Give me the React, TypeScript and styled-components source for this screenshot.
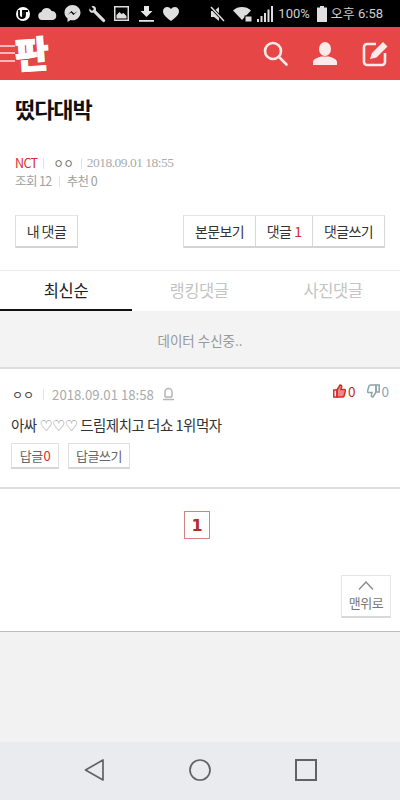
import React from 'react';
import styled, { createGlobalStyle } from 'styled-components';

const GlobalStyle = createGlobalStyle`
  html, body { margin: 0; padding: 0; background: #f2f2f2; }
  body { font-family: "Noto Sans CJK KR", "Noto Sans", sans-serif; }
  * { box-sizing: border-box; }
`;

const Page = styled.div`
  width: 400px;
  height: 800px;
  display: flex;
  flex-direction: column;
  overflow: hidden;
`;

const StatusBar = styled.div`
  height: 27px;
  flex: none;
  background: #000;
  display: flex;
  align-items: center;
  padding: 0 17px 0 15px;
  color: #ddd;
`;

const StatusLeft = styled.div`
  display: flex;
  align-items: center;
  gap: 6px;
  flex: 1;
`;

const StatusRight = styled.div`
  display: flex;
  align-items: center;
  gap: 4px;
`;

const StatusText = styled.span`
  font-family: Roboto, "Noto Sans CJK KR", sans-serif;
  font-size: 13px;
  color: #cfcfcf;
  line-height: 1;
  white-space: nowrap;
`;

const Header = styled.header`
  height: 53px;
  flex: none;
  background: #e64646;
  display: flex;
  align-items: center;
  padding-right: 11px;
`;

const Burger = styled.div`
  width: 15px;
  height: 17px;
  display: flex;
  flex-direction: column;
  justify-content: space-between;
  margin-top: -1px;
  span {
    display: block;
    height: 2px;
    background: #f6b9b9;
  }
`;

const Logo = styled.span`
  font-size: 37px;
  font-weight: 900;
  line-height: 1;
  color: #fff;
  display: block;
  transform: rotate(-4deg) translateY(-1px);
  -webkit-text-stroke: 1px #fff;
  text-shadow: 1px 1px 0 #c93232;
`;

const HeaderIcons = styled.div`
  margin-left: auto;
  display: flex;
  align-items: center;
  gap: 25px;
`;

const Content = styled.main`
  background: #fff;
  flex: none;
`;

const TitleBlock = styled.section`
  padding: 11px 15px 0;
  height: 135px;
`;

const Title = styled.h1`
  margin: 0;
  font-size: 22px;
  line-height: 34px;
  font-weight: 700;
  color: #111;
  letter-spacing: -1.1px;
`;

const Meta = styled.div`
  margin-top: 29px;
  font-size: 12.5px;
  line-height: 18px;
  color: #a0a0a0;
  letter-spacing: -0.6px;
`;

const MetaRow = styled.div`
  display: flex;
  align-items: center;
  gap: 5px;
`;

const Sep = styled.i`
  display: inline-block;
  width: 1px;
  height: 11px;
  background: #e2e2e2;
`;

const Red = styled.span`
  color: #d22e2e;
`;

const Maru = styled.span`
  font-size: 11px;
  letter-spacing: 0;
  color: #666;
`;

const SerifDate = styled.span`
  font-family: "Liberation Serif", serif;
  font-size: 13.5px;
  color: #aaa;
  letter-spacing: -0.5px;
`;

const Toolbar = styled.div`
  display: flex;
  justify-content: space-between;
  padding: 0 15px 22px;
  border-bottom: 1px solid #ececec;
`;

const Group = styled.div`
  display: flex;
`;

const Btn = styled.div<{ $w: number; $joined?: boolean }>`
  width: ${(p) => p.$w}px;
  height: 33px;
  display: flex;
  align-items: center;
  justify-content: center;
  gap: 3px;
  padding-bottom: 1px;
  font-size: 14px;
  letter-spacing: -0.6px;
  color: #333;
  background: #fff;
  border: 1px solid #e6e6e6;
  border-left: ${(p) => (p.$joined ? 'none' : '1px solid #ddd')};
  border-bottom: 2px solid #d4d4d4;
  border-right: 1px solid #d8d8d8;
`;

const Tabs = styled.nav`
  display: grid;
  grid-template-columns: 132px 1fr 1fr;
  height: 40px;
`;

const Tab = styled.div<{ $active?: boolean }>`
  display: flex;
  align-items: center;
  justify-content: center;
  font-size: 16.5px;
  letter-spacing: -0.4px;
  color: ${(p) => (p.$active ? '#222' : '#c4c4c4')};
  border-bottom: 2px solid ${(p) => (p.$active ? '#111' : 'transparent')};
`;

const Receiving = styled.div`
  height: 58px;
  background: #f3f3f3;
  border-bottom: 2px solid #ddd;
  display: flex;
  align-items: center;
  justify-content: center;
  padding-top: 2px;
  font-size: 13.5px;
  color: #999;
`;

const Comment = styled.article`
  padding: 13px 11px 0 11px;
  height: 120px;
  border-bottom: 2px solid #ddd;
`;

const CommentHead = styled.div`
  display: flex;
  align-items: center;
  height: 24px;
  gap: 8px;
  font-size: 13.2px;
  color: #aaa;
`;

const HeadMaru = styled(Maru)`
  font-size: 12px;
  margin-left: 1px;
  margin-right: 1px;
  color: #444;
`;

const Votes = styled.div`
  margin-left: auto;
  display: flex;
  align-items: center;
  gap: 11px;
  margin-top: -6px;
`;

const Vote = styled.span<{ $up?: boolean }>`
  display: flex;
  align-items: center;
  gap: 2px;
  font-size: 13.5px;
  color: ${(p) => (p.$up ? '#c92a2a' : '#8fa3ad')};
`;

const Body = styled.p`
  margin: 9px 0 0;
  font-size: 14.5px;
  line-height: 20px;
  color: #333;
  letter-spacing: -0.5px;
  white-space: nowrap;
`;

const Hearts = styled.span`
  font-family: "DejaVu Sans", sans-serif;
  font-size: 15px;
  color: #777;
  letter-spacing: -0.8px;
`;

const Replies = styled.div`
  display: flex;
  gap: 9px;
  margin-top: 7px;
`;

const ReplyBtn = styled.div<{ $w: number }>`
  width: ${(p) => p.$w}px;
  height: 26px;
  display: flex;
  align-items: center;
  justify-content: center;
  gap: 1px;
  font-size: 13px;
  letter-spacing: -0.5px;
  color: #666;
  border: 1px solid #e0e0e0;
  border-bottom: 2px solid #d6d6d6;
`;

const Pager = styled.div`
  display: flex;
  justify-content: center;
  padding: 22px 0 36px;
  margin-left: -6px;
`;

const PageNum = styled.div`
  width: 26px;
  height: 28px;
  display: flex;
  align-items: center;
  justify-content: center;
  border: 1px solid #d98080;
  color: #b52b2b;
  font-family: "DejaVu Sans", sans-serif;
  font-size: 16px;
  font-weight: 700;
`;

const TopRow = styled.div`
  display: flex;
  justify-content: flex-end;
  padding: 0 9px 13px 0;
  border-bottom: 1px solid #bdbdbd;
`;

const TopBtn = styled.div`
  width: 50px;
  height: 43px;
  display: flex;
  flex-direction: column;
  align-items: center;
  padding-top: 5px;
  border: 1px solid #e6e6e6;
  border-bottom: 2px solid #d8d8d8;
  font-size: 13px;
  line-height: 15px;
  letter-spacing: -0.5px;
  color: #777;
`;

const TopLabel = styled.span`
  margin-top: 5px;
`;

const Filler = styled.div`
  flex: 1;
  background: #f2f2f2;
`;

const NavBar = styled.div`
  height: 58px;
  flex: none;
  background: #e9ebee;
  display: grid;
  grid-template-columns: 105px 106px 1fr;
  align-items: center;
  padding-left: 84px;
  padding-bottom: 2px;
`;

const StatusIcons = () => (
  <>
    <svg width="16" height="16" viewBox="0 0 16 16">
      <circle cx="8" cy="8" r="7" fill="#fff" />
      <path d="M4 4v5a3 3 0 0 0 6 0V4M8 12V5h5" fill="none" stroke="#000" strokeWidth="1.8" />
    </svg>
    <svg width="19" height="13" viewBox="0 0 19 13" style={{ marginLeft: 1 }}>
      <path d="M4 13a4 4 0 0 1-.6-7.9A5.5 5.5 0 0 1 13.6 4 4.6 4.6 0 0 1 15 13z" fill="#ddd" />
    </svg>
    <svg width="19" height="19" viewBox="0 0 18 19">
      <path d="M9 1C4.6 1 1 4.3 1 8.5c0 2.4 1.1 4.4 3 5.8V18l3.2-1.900c.6.100 1.200.200 1.800.200 4.400 0 8-3.500 8-7.800S13.400 1 9 1z" fill="#ddd" />
      <path d="M4 11l4-4 2.500 2.500L14 7l-4 4-2.500-2.500z" fill="#000" />
    </svg>
    <svg width="18" height="18" viewBox="0 0 18 18">
      <path d="M1.500 3.500L4 6l2-2-2.500-2.500C5.500.500 8 1.500 8 4c0 .600 0 1-.200 1.500l9 9c.800 1 .500 1.800-.200 2.300-.700.500-1.500.500-2.200-.200l-9-9C3 8.500.500 6.500 1.500 3.500z" fill="#ddd" />
    </svg>
    <svg width="15" height="15" viewBox="0 0 15 15" style={{ marginLeft: 2 }}>
      <rect x="0.750" y="0.750" width="13.500" height="13.500" fill="none" stroke="#ddd" strokeWidth="1.500" />
      <path d="M2.500 12.500V9l3-3 2 2 2-1 3 3v2.500z" fill="#ddd" />
    </svg>
    <svg width="15" height="16" viewBox="0 0 15 16" style={{ marginLeft: 4 }}>
      <path d="M5 0h5v5h3.500L7.500 11 1.500 5H5zM0 14h15v1.800H0z" fill="#e6e6e6" />
    </svg>
    <svg width="16" height="14" viewBox="0 0 16 14" style={{ marginLeft: 3 }}>
      <path d="M8 14C2 9.500 0 7 0 4.200 0 1.800 1.800 0 4.200 0 5.700 0 7.100.8 8 2c.9-1.200 2.300-2 3.800-2C14.200 0 16 1.800 16 4.200 16 7 14 9.500 8 14z" fill="#e0e0e0" />
    </svg>
  </>
);

const SearchIcon = () => (
  <svg width="25" height="25" viewBox="0 0 25 25" fill="none" stroke="#fbeaea" strokeWidth="2.600">
    <circle cx="10" cy="10" r="8" />
    <path d="M16 16l7.500 7.500" strokeLinecap="round" />
  </svg>
);

const UserIcon = () => (
  <svg width="24" height="23" viewBox="0 0 24 23" fill="#fbeaea">
    <ellipse cx="12" cy="7" rx="6" ry="7" />
    <path d="M0 23v-3c0-3 5-4.500 8-5.500h8c3 1 8 2.500 8 5.500v3z" />
  </svg>
);

const WriteIcon = () => (
  <svg width="27" height="27" viewBox="0 0 27 27">
    <path d="M14 4H5a3 3 0 0 0-3 3v15a3 3 0 0 0 3 3h15a3 3 0 0 0 3-3v-9" fill="none" stroke="#fbeaea" strokeWidth="2.600" />
    <path d="M8 19l2-6L21 2l4.500 4.500L14.500 17.500z" fill="#fbeaea" />
  </svg>
);

const Thumb = ({ color, down }: { color: string; down?: boolean }) => (
  <svg width="13" height="14" viewBox="0 0 13 14" fill="none" stroke={color} strokeWidth="1.500" style={down ? { transform: 'scale(-1,-1)' } : undefined}>
    <path d="M4 6l3-5c1.500 0 2 1 1.500 2.500L8 5.500h3.500c1 0 1 1 .8 2L11 12c-.2.800-.6 1-1.500 1H4z" fill={down ? 'none' : '#ee8a8a'} />
    <rect x="0.800" y="6" width="3.200" height="7" />
  </svg>
);

export default function App() {
  return (
    <Page>
      <GlobalStyle />
      <StatusBar>
        <StatusLeft>
          <StatusIcons />
        </StatusLeft>
        <StatusRight>
          <svg width="15" height="16" viewBox="0 0 15 16" style={{ marginRight: 4 }}>
            <path d="M1 5h3l5-4v14l-5-4H1z" fill="#ddd" />
            <path d="M1 1l13 14" stroke="#000" strokeWidth="3" />
            <path d="M1 1l13 14" stroke="#ddd" strokeWidth="1.500" />
          </svg>
          <svg width="20" height="16" viewBox="0 0 20 16">
            <path d="M0 4.500C2.500 2 5.500 1 9 1s6.500 1 9 3.500L9 14z" fill="#ddd" />
            <rect x="12" y="10" width="7" height="6" fill="#ddd" stroke="#000" />
          </svg>
          <svg width="16" height="16" viewBox="0 0 16 16" fill="#ddd">
            <rect x="0" y="13" width="2" height="3" />
            <rect x="3.500" y="10" width="2" height="6" />
            <rect x="7" y="7" width="2" height="9" />
            <rect x="10.500" y="3.500" width="2" height="12.500" />
            <rect x="14" y="0" width="2" height="16" />
          </svg>
          <StatusText style={{ marginLeft: 1 }}>100%</StatusText>
          <svg width="10" height="16" viewBox="0 0 10 16" style={{ marginLeft: 3 }}>
            <path d="M3 0h4v1.500h3V16H0V1.500h3z" fill="#e0e0e0" />
          </svg>
          <StatusText>오후 6:58</StatusText>
        </StatusRight>
      </StatusBar>

      <Header>
        <Burger>
          <span />
          <span />
          <span />
        </Burger>
        <Logo>판</Logo>
        <HeaderIcons>
          <SearchIcon />
          <UserIcon />
          <WriteIcon />
        </HeaderIcons>
      </Header>

      <Content>
        <TitleBlock>
          <Title>떴다대박</Title>
          <Meta>
            <MetaRow>
              <Red>NCT</Red>
              <Sep style={{ marginLeft: 1, marginRight: 4 }} />
              <Maru>ㅇㅇ</Maru>
              <Sep style={{ marginLeft: 2 }} />
              <SerifDate>2018.09.01 18:55</SerifDate>
            </MetaRow>
            <MetaRow>
              <span>조회 12</span>
              <Sep style={{ marginLeft: 2, marginRight: 2 }} />
              <span>추천 0</span>
            </MetaRow>
          </Meta>
        </TitleBlock>

        <Toolbar>
          <Btn $w={63}>내 댓글</Btn>
          <Group>
            <Btn $w={73}>본문보기</Btn>
            <Btn $w={57} $joined>
              댓글 <Red>1</Red>
            </Btn>
            <Btn $w={72} $joined>
              댓글쓰기
            </Btn>
          </Group>
        </Toolbar>

        <Tabs>
          <Tab $active>최신순</Tab>
          <Tab>랭킹댓글</Tab>
          <Tab>사진댓글</Tab>
        </Tabs>

        <Receiving>데이터 수신중..</Receiving>

        <Comment>
          <CommentHead>
            <HeadMaru>ㅇㅇ</HeadMaru>
            <Sep />
            <span>2018.09.01 18:58</span>
            <svg width="13" height="14" viewBox="0 0 13 14" fill="none" stroke="#b5b5b5" strokeWidth="1.500">
              <path d="M3 10V5a3.500 3.500 0 0 1 7 0v5M1 12.500h11" />
              <path d="M3 10h7" />
            </svg>
            <Votes>
              <Vote $up>
                <Thumb color="#d62b2b" />0
              </Vote>
              <Vote>
                <Thumb color="#8fa3ad" down />0
              </Vote>
            </Votes>
          </CommentHead>
          <Body>
            아싸 <Hearts>♡♡♡</Hearts> 드림제치고 더쇼 1위먹자
          </Body>
          <Replies>
            <ReplyBtn $w={48}>
              답글<Red>0</Red>
            </ReplyBtn>
            <ReplyBtn $w={62}>답글쓰기</ReplyBtn>
          </Replies>
        </Comment>

        <Pager>
          <PageNum>1</PageNum>
        </Pager>

        <TopRow>
          <TopBtn>
            <svg width="16" height="9" viewBox="0 0 16 9" fill="none" stroke="#888" strokeWidth="1.300">
              <path d="M1 8.500L8 1l7 7.500" />
            </svg>
            <TopLabel>맨위로</TopLabel>
          </TopBtn>
        </TopRow>
      </Content>

      <Filler />

      <NavBar>
        <svg width="20" height="22" viewBox="0 0 20 22" fill="none" stroke="#5f6266" strokeWidth="1.700">
          <path d="M19 1v20L1.500 11z" strokeLinejoin="round" />
        </svg>
        <svg width="22" height="22" viewBox="0 0 22 22" fill="none" stroke="#5f6266" strokeWidth="1.700">
          <circle cx="11" cy="11" r="10" />
        </svg>
        <svg width="22" height="22" viewBox="0 0 22 22" fill="none" stroke="#5f6266" strokeWidth="2">
          <rect x="1" y="1" width="20" height="20" />
        </svg>
      </NavBar>
    </Page>
  );
}
